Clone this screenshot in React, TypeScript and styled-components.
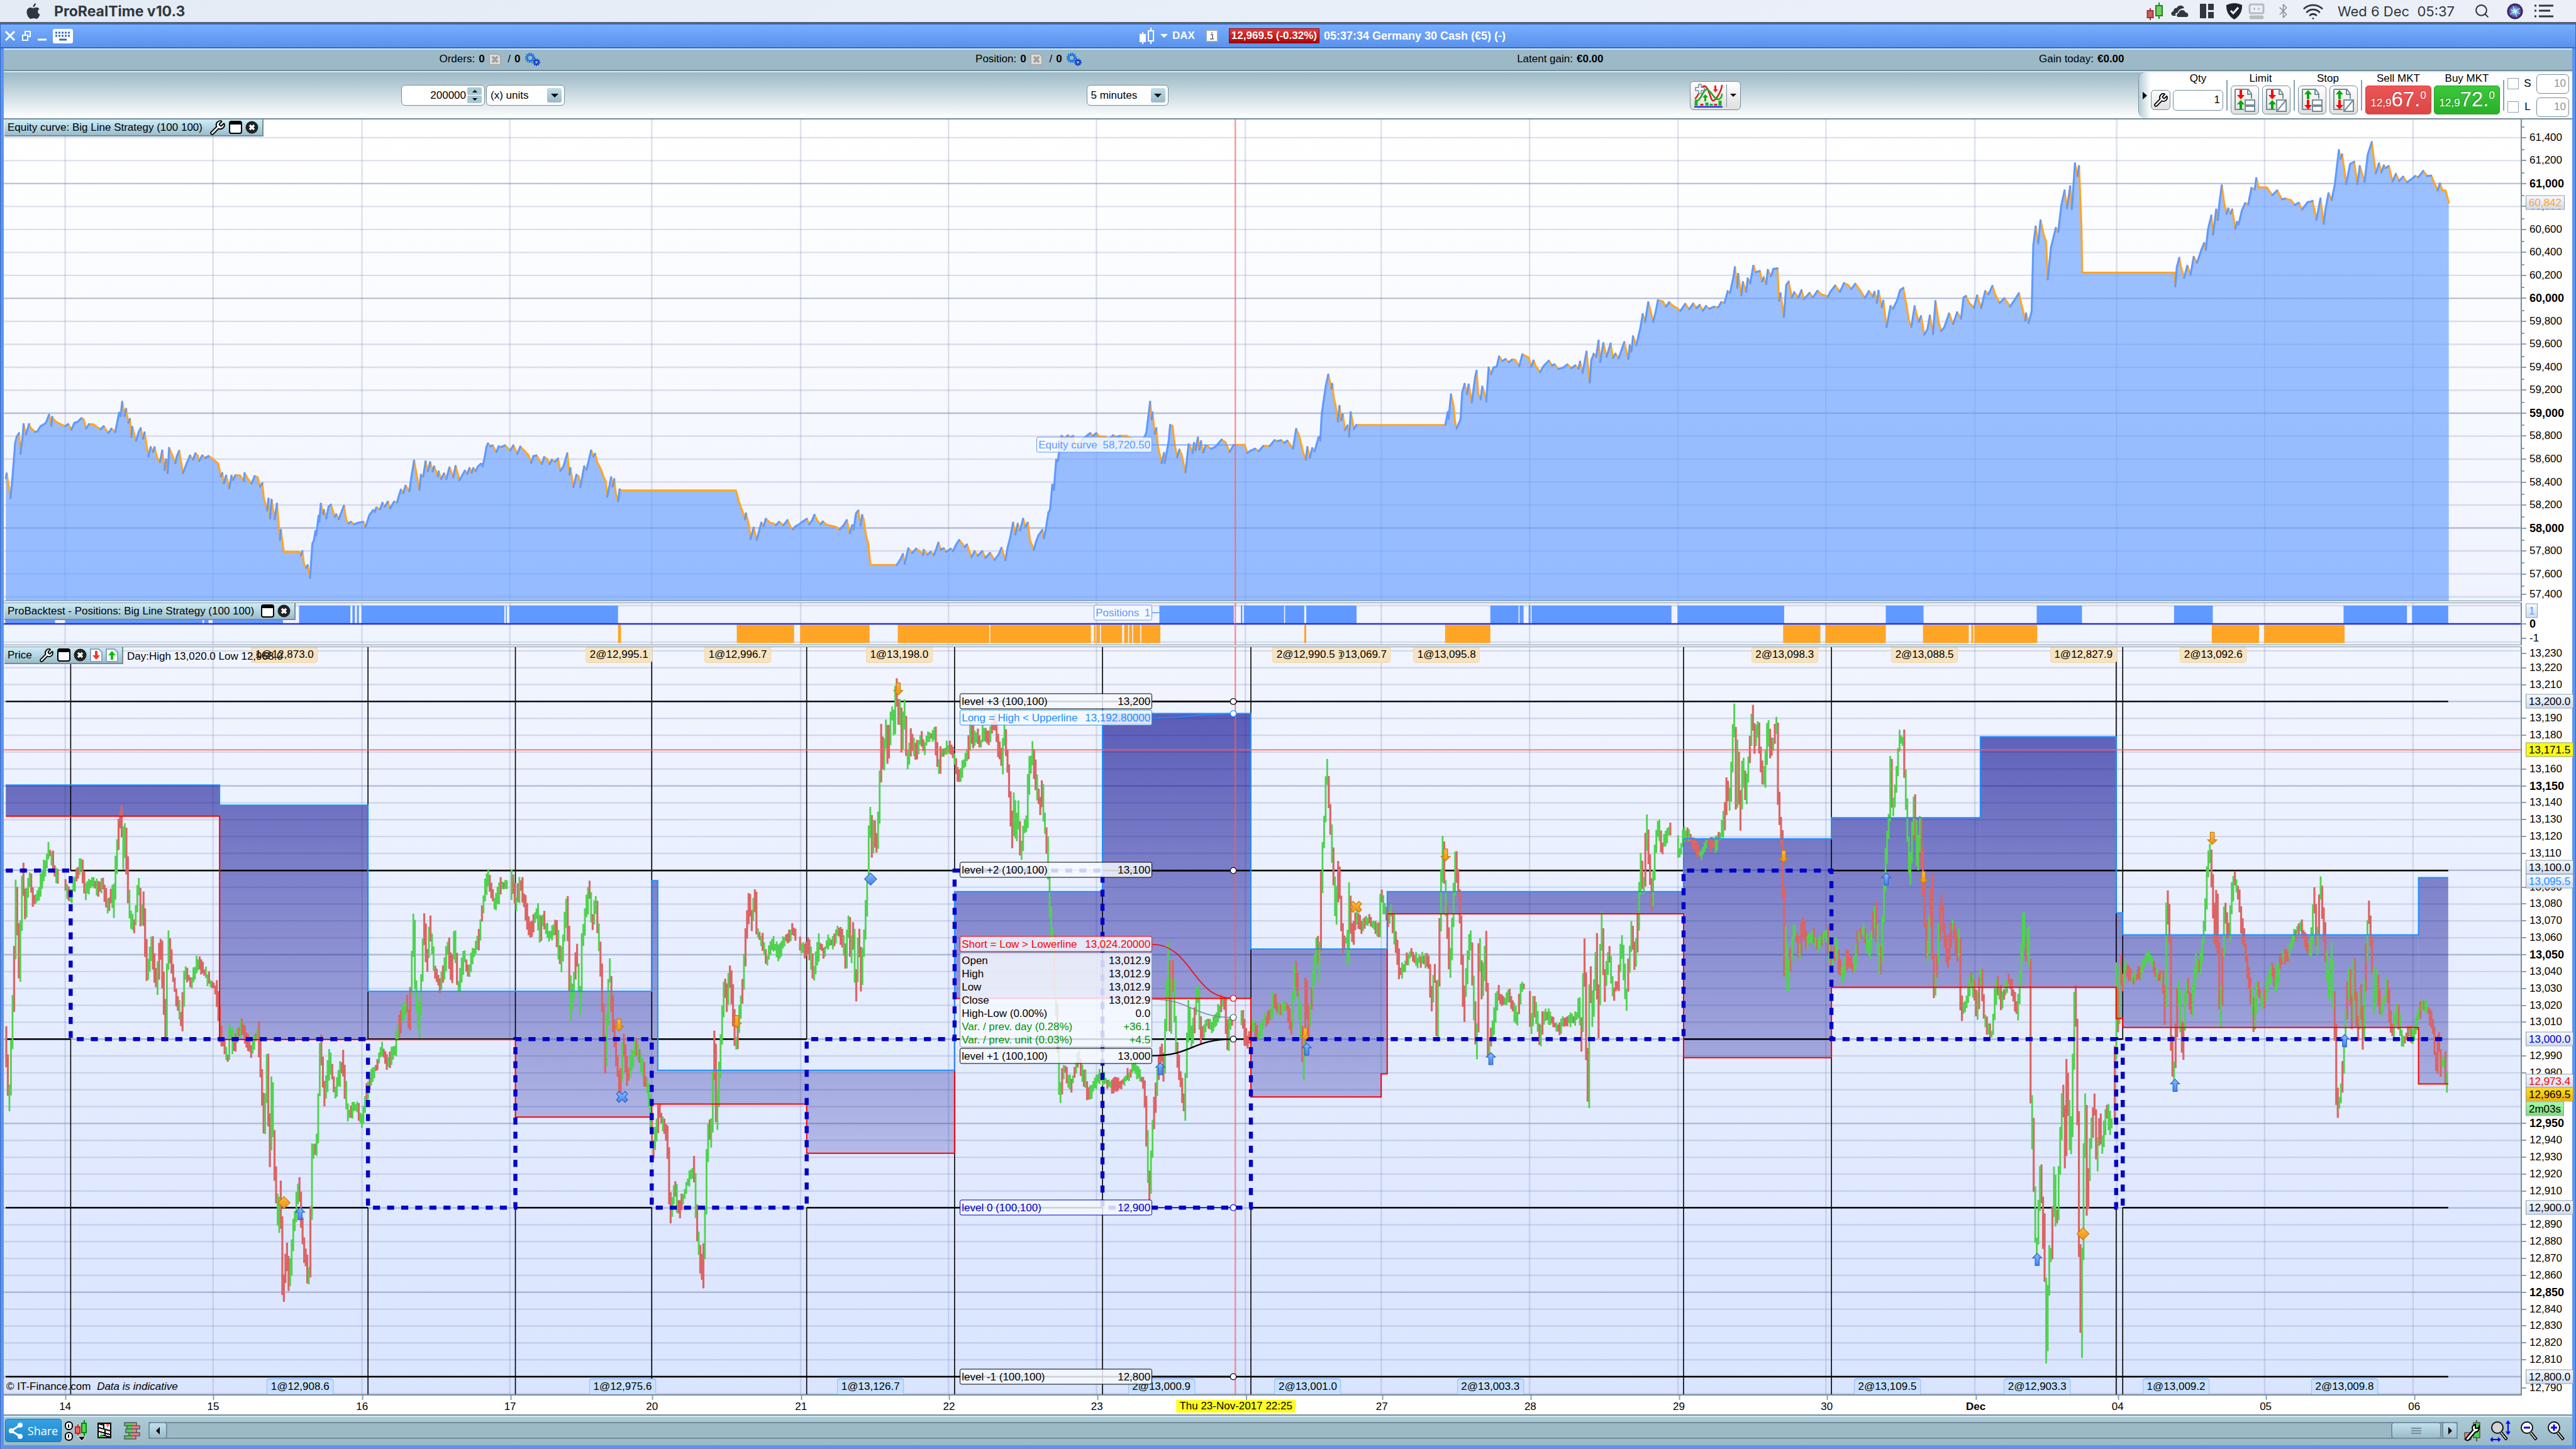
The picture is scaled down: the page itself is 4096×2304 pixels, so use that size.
import React from "react";
import styled, { createGlobalStyle, css } from "styled-components";
import { Wrench, Search, Wifi, Bluetooth } from "lucide-react";

const GlobalStyle = createGlobalStyle`
  * { box-sizing: border-box; }
  body { margin: 0; background: #5a94ee; font-family: "Liberation Sans", Arial, sans-serif; font-size: 17px; line-height: 20px; color: #000; }
  button, input, select { font: inherit; color: inherit; margin: 0; padding: 0; border: 0; background: none; }
  svg { display: block; }
`;

/* ---------- chart data ---------- */

type Pt = [number, number];
const pairs = (s: string): Pt[] =>
  s.trim().split(/\s+/).map((p) => p.split(",").map(Number) as Pt);

const PLOT = { x: 8, w: 5003 };
const EQUITY = { y: 238, h: 955 };
const POSITIONS = { y: 1199, h: 82 };
const PRICE = { y: 1286, h: 1485 };
const pctX = (x: number) => `${((x - PLOT.x) / PLOT.w) * 100}%`;
const pctY = (y: number, pane: { y: number; h: number }) => `${((y - pane.y) / pane.h) * 100}%`;
const priceY = (p: number) => 1394 + (13200 - p) * 3.355;
const equityY = (v: number) => 274 + (61400 - v) * 0.2279;

const EQUITY_FIRST = pairs(`8,510 9,482 11,540 14,630 17,480 20,300 22,262 25,242 27,365 30,250 31,188 34,250 38,188 40,210 46,235 49,230 53,200 57,190 60,180 64,132 67,198 68,145 70,160 75,180 85,200 89,188 93,222 97,180 101,175 106,153 109,160 112,215 116,188 122,190 126,205 131,218 135,200 141,242 145,215 150,235 155,120 157,140 159,55 162,140 164,97 167,180 169,158 171,265 172,205 177,288 180,240 183,212 186,275 188,238 193,380 196,325 199,355 201,326 204,385 208,415 211,345 214,462 216,398 218,480 220,330 225,385 228,420 230,380 233,348 238,480 242,430 247,375 251,400 254,362 257,375 259,408 263,375 267,390 271,378 278,400 284,425 287,500 289,480 291,540 294,495 298,570 301,495 303,520 306,493 312,493 317,528 318,480 321,505 327,542 331,498 335,505 338,560 341,540 343,628 347,702 349,632 351,750 353,638 357,755 360,662 364,878 365,818 368,920 369,948 389,948 391,970 393,945 395,1020 398,1045 400,1028 403,1105 406,900 408,880 410,825 411,850 414,735 415,768 417,662 420,725 421,700 424,750 427,680 430,668 435,740 437,725 440,755 443,720 447,674 450,760 453,780 456,770 460,785 466,775 472,770 475,802 480,730 485,700 487,712 489,685 494,695 497,657 500,680 504,650 507,690 512,650 516,655 518,620 521,578 524,600 527,555 532,588 534,520 538,405 541,480 545,580 547,490 550,500 553,410 556,470 559,415 562,470 564,440 569,500 570,470 573,515 577,482 580,515 584,446 589,505 592,438 597,522 601,490 604,465 607,485 610,450 613,478 615,450 618,468 621,440 625,424 627,440 630,380 632,325 634,303 637,320 640,315 645,355 648,320 651,325 656,315 663,345 667,315 672,365 676,322 682,350 687,375 690,420 693,378 697,375 704,425 707,385 711,395 714,427 717,400 721,412 725,393 728,468 732,440 737,362 740,490 741,450 745,563 749,490 752,500 754,563 759,440 762,460 768,345 771,380 773,365 776,415 781,460 784,500 787,530 789,620 794,505 796,560 798,515 800,600 803,648 805,577 808,583 956,583 960,650 965,715 968,755 969,720 973,790 975,872 979,805 983,878 989,775 992,795 995,752 1000,775 1005,780 1008,790 1012,770 1018,790 1023,760 1027,800 1030,815 1033,798 1038,785 1042,770 1048,752 1051,785 1055,760 1058,728 1062,765 1066,785 1069,768 1073,785 1078,792 1086,800 1091,815 1096,790 1100,760 1104,838 1107,790 1109,815 1112,720 1115,703 1118,792 1120,730 1122,755 1125,850 1128,900 1130,1000 1131,1027 1165,1027 1168,1005 1170,990 1173,962 1175,1020 1180,928 1185,955 1190,930 1195,945 1199,968 1200,937 1205,965 1209,948 1213,968 1216,935 1219,895 1222,935 1226,928 1229,948 1235,930 1238,945 1242,905 1246,878 1250,900 1253,920 1256,905 1262,980 1266,945 1270,972 1276,945 1280,985 1286,955 1292,997 1297,965 1301,925 1306,998 1309,920 1312,870 1316,775 1319,845 1322,782 1325,822 1329,752 1332,800 1335,775 1338,880 1343,937 1346,885 1349,850 1354,818 1356,868 1359,800 1362,712 1364,700 1367,548 1369,580 1372,400 1374,410 1379,258 1384,275 1387,255 1390,268 1394,258 1398,350 1402,300 1407,275 1416,242 1420,258 1424,242 1428,262 1436,262 1440,280 1446,255 1450,265 1455,258 1463,258 1475,285 1485,280 1489,240 1494,55 1496,160 1497,118 1500,245 1502,212 1504,320 1509,420 1512,360 1513,420 1518,290 1520,193 1523,198 1526,310 1529,385 1532,340 1535,372 1540,475 1544,308 1546,320 1549,360 1551,300 1553,345 1556,268 1558,340 1560,290 1563,358 1566,315`).map(
  ([x, y]): Pt => [x * 1.5306, 780 + y / 3]
);
const EQUITY_SECOND = pairs(`0,1535 5,1548 10,1540 18,1505 23,1518 28,1563 33,1530 47,1530 50,1568 55,1555 60,1548 64,1560 70,1535 78,1535 84,1508 88,1512 92,1508 96,1520 100,1510 107,1548 111,1455 115,1490 120,1568 123,1600 125,1540 128,1590 131,1545 134,1560 139,1493 141,1510 143,1380 148,1250 151,1198 155,1265 156,1242 158,1310 160,1340 163,1420 165,1346 167,1415 169,1385 172,1460 175,1438 177,1490 179,1375 183,1455 186,1436 297,1436 300,1375 301,1408 304,1292 307,1340 309,1420 311,1453 316,1408 318,1283 321,1242 324,1290 326,1245 330,1330 334,1213 336,1180 338,1290 341,1315 343,1255 346,1290 348,1325 351,1165 354,1197 357,1165 361,1160 364,1113 368,1135 372,1125 376,1140 380,1128 384,1128 389,1160 393,1103 401,1118 404,1162 407,1132 410,1160 415,1187 420,1155 426,1133 430,1155 433,1150 438,1172 444,1165 449,1150 454,1168 459,1155 463,1170 465,1137 468,1190 473,1090 477,1236 479,1130 482,1100 485,1115 488,1038 490,1140 494,1050 498,1115 503,1052 506,1120 509,1100 513,1122 520,1045 525,1125 527,1060 529,1090 531,1018 535,1060 540,980 543,913 546,950 550,857 553,900 556,950 559,905 562,848 568,853 572,878 576,857 580,872 586,885 590,898 596,865 601,890 606,863 610,885 614,870 618,897 622,875 626,888 632,878 637,882 641,857 645,860 649,805 652,813 656,740 658,692 661,790 662,723 666,825 668,762 672,808 674,745 677,768 681,685 684,715 689,710 692,760 694,740 697,772 699,705 703,735 706,700 711,697 713,850 715,815 719,927 722,775 725,760 729,835 732,810 737,835 741,800 744,842 751,813 755,835 761,803 765,818 774,830 777,808 783,778 789,808 794,767 799,775 803,795 808,770 814,800 820,837 825,805 830,830 832,808 835,860 837,803 841,880 843,850 847,975 852,875 855,888 860,850 864,800 868,790 872,875 875,945 878,973 882,876 887,950 890,923 894,1010 898,985 901,920 905,1008 908,852 912,950 915,993 919,975 925,910 930,960 935,905 940,935 943,835 946,828 950,860 956,883 960,825 965,885 970,805 974,820 979,780 983,825 988,860 994,838 1001,877 1006,850 1012,815 1017,895 1020,945 1021,910 1024,955 1028,900 1030,590 1033,500 1036,580 1039,471 1043,540 1046,570 1048,750 1052,600 1058,507 1061,525 1065,400 1069,330 1072,413 1076,310 1078,418 1082,202 1085,262 1087,215 1090,500 1091,718 1206,718 1207,783 1209,690 1212,648 1214,690 1218,742 1222,685 1226,728 1230,643 1234,672 1240,605 1243,578 1245,610 1248,510 1252,448 1254,538 1258,420 1260,470 1262,390 1265,306 1268,390 1271,440 1273,415 1276,440 1278,420 1282,510 1284,478 1286,490 1290,425 1294,390 1298,395 1302,318 1306,325 1308,272 1311,315 1321,315 1328,352 1334,330 1340,372 1344,368 1351,375 1356,398 1361,388 1365,420 1372,385 1378,380 1383,468 1388,368 1392,487 1394,425 1398,343 1402,375 1406,300 1411,140 1413,180 1415,160 1418,240 1420,300 1425,205 1430,195 1434,300 1437,215 1443,290 1447,160 1452,102 1454,165 1457,250 1461,202 1464,245 1467,212 1469,225 1473,215 1478,288 1482,252 1486,285 1491,265 1496,292 1502,275 1506,262 1510,268 1516,238 1521,262 1526,260 1534,330 1537,297 1540,330 1544,330 1548,388`).map(
  ([x, y]): Pt => [2400 + x * 1.5944, 240 + y * 0.42092]
);
const EQUITY_PTS = [...EQUITY_FIRST, ...EQUITY_SECOND];

const PRICE_PTS = pairs(`12,2020 21,2195 31,1927 34,1762 41,1930 48,1721 52,1818 60,1741 70,1792 81,1767 92,1721 100,1690 105,1695 110,1735 117,1741 132,1757 141,1787 152,1746 163,1713 171,1772 184,1751 200,1767 206,1751 217,1802 225,1772 228,1805 236,1670 244,1601 247,1721 251,1640 260,1818 269,1843 279,1746 282,1838 287,1787 295,1935 304,1874 314,1960 322,1869 332,2055 337,1857 350,1960 363,2036 370,1928 383,1953 395,1908 413,1940 433,1966 441,2055 456,2106 459,2042 467,2081 482,2036 501,2087 516,2042 528,2246 534,2106 539,2310 543,2151 548,2310 556,2438 560,2348 565,2578 572,2482 577,2553 589,2412 597,2355 606,2482 617,2546 624,2278 632,2285 640,2068 647,2183 658,2100 669,2176 684,2106 693,2215 712,2195 722,2234 735,2151 750,2119 761,2081 773,2112 788,2081 799,2023 811,1991 816,2036 825,1832 829,1976 836,2042 846,1823 851,1915 857,1833 867,1935 878,1961 893,1879 900,1940 906,1859 913,1966 925,1894 932,1935 943,1894 954,1864 963,1792 971,1736 979,1777 987,1797 997,1757 1008,1754 1017,1777 1019,1746 1028,1797 1038,1751 1046,1802 1057,1853 1070,1808 1077,1859 1081,1818 1093,1864 1106,1833 1117,1915 1130,1787 1137,2010 1149,1889 1156,2004 1160,1859 1174,1762 1180,1838 1187,1792 1196,1905 1206,2119 1214,1915 1224,2068 1235,2170 1241,2074 1250,2138 1266,2074 1281,2125 1293,2183 1301,2291 1312,2208 1329,2259 1335,2412 1344,2361 1352,2406 1367,2355 1382,2317 1387,2425 1399,2543 1404,2438 1410,2234 1416,2272 1423,2055 1427,2240 1436,2055 1442,1953 1448,1991 1454,1921 1465,2081 1477,1985 1485,1864 1493,1777 1496,1838 1504,1772 1507,1853 1518,1869 1527,1910 1537,1869 1550,1894 1564,1864 1577,1848 1591,1869 1603,1892 1608,1875 1621,1932 1631,1875 1640,1892 1648,1869 1657,1875 1667,1846 1675,1863 1684,1903 1689,1823 1694,1898 1699,1840 1704,1978 1710,1852 1714,1949 1721,1857 1728,1737 1732,1605 1736,1685 1740,1645 1745,1679 1751,1582 1754,1456 1758,1513 1764,1444 1767,1501 1775,1410 1780,1456 1784,1358 1788,1433 1791,1398 1795,1478 1800,1404 1806,1513 1814,1467 1823,1496 1833,1461 1839,1484 1849,1461 1860,1456 1868,1530 1874,1490 1887,1484 1897,1493 1903,1524 1909,1547 1916,1524 1925,1501 1932,1444 1938,1473 1944,1456 1952,1478 1958,1450 1967,1467 1976,1444 1981,1427 1986,1478 1994,1519 1999,1438 2006,1524 2011,1605 2015,1668 2018,1582 2022,1651 2026,1605 2032,1697 2039,1633 2043,1645 2048,1524 2056,1490 2060,1542 2071,1605 2074,1553 2078,1622 2083,1668 2088,1754 2091,1840 2094,1892 2096,1857 2099,1949 2104,2030 2109,2176 2118,2119 2131,2157 2147,2100 2166,2176 2189,2138 2212,2157 2235,2148 2258,2119 2278,2157 2287,2387 2296,2208 2311,2081 2316,2132 2325,1892 2329,2041 2333,1909 2340,2075 2357,2208 2365,2001 2372,2070 2383,1961 2390,2058 2400,2030 2410,2041 2420,2024 2431,1990 2437,2001 2443,2070 2448,2030 2470,2018 2479,2064 2482,2067 2494,2034 2503,2059 2516,2026 2529,2017 2534,1984 2547,2005 2559,1993 2570,2051 2577,1918 2585,1993 2594,2133 2598,1951 2604,2042 2611,1968 2621,1868 2625,1934 2630,1727 2635,1636 2640,1520 2648,1653 2653,1719 2658,1827 2663,1719 2672,1876 2679,1868 2682,1910 2684,1760 2690,1868 2699,1818 2708,1843 2721,1827 2735,1835 2745,1851 2746,1777 2754,1802 2761,1827 2769,1810 2777,1876 2786,1934 2797,1910 2809,1893 2820,1910 2833,1901 2844,1918 2848,1993 2855,1926 2859,2059 2863,1910 2870,1669 2878,1818 2885,1926 2890,1827 2896,1702 2904,1794 2912,2009 2922,1885 2926,1852 2933,2001 2938,2100 2943,1868 2949,1968 2956,1868 2961,2092 2971,2034 2980,1968 2989,1993 3000,1976 3010,1993 3018,2026 3028,1955 3041,1976 3045,2034 3052,1993 3063,2059 3074,2009 3086,2026 3101,2046 3114,2022 3128,2026 3138,2017 3142,1984 3146,2075 3152,1876 3156,2092 3160,2183 3163,1926 3168,2026 3177,1860 3179,2051 3186,1827 3192,1968 3201,1885 3208,1976 3219,1951 3227,1868 3235,1993 3246,1843 3253,1910 3260,1810 3264,1711 3270,1769 3276,1628 3281,1711 3287,1794 3293,1686 3298,1632 3306,1686 3315,1661 3321,1644 3336,1677 3340,1698 3351,1653 3364,1669 3382,1698 3396,1669 3409,1682 3422,1661 3430,1628 3436,1553 3441,1595 3450,1412 3454,1586 3456,1470 3462,1628 3467,1512 3473,1586 3480,1495 3486,1408 3491,1478 3496,1437 3503,1520 3510,1553 3516,1445 3522,1487 3530,1462 3534,1429 3538,1595 3545,1669 3550,1934 3552,1843 3555,1959 3561,1910 3568,1843 3574,1860 3580,1893 3586,1835 3594,1876 3605,1856 3616,1876 3633,1852 3644,1915 3652,1875 3663,1943 3674,1898 3687,1926 3694,1869 3705,1846 3718,1892 3730,1806 3736,1892 3741,1926 3748,1760 3753,1679 3758,1616 3761,1513 3765,1616 3773,1536 3778,1467 3786,1467 3792,1605 3799,1748 3807,1588 3814,1708 3820,1633 3828,1823 3834,1909 3842,1754 3846,1978 3853,1915 3861,1788 3874,1909 3883,1829 3894,1898 3897,1857 3901,2018 3910,1995 3921,1938 3932,2007 3940,1932 3948,2030 3962,2058 3971,1949 3981,1989 3995,1943 4003,1972 4013,2012 4020,1926 4024,1817 4029,1898 4036,1840 4041,2281 4044,2230 4047,2415 4050,2483 4054,2449 4057,2337 4060,2320 4064,2471 4066,2415 4070,2701 4073,2589 4077,2494 4081,2483 4086,2337 4089,2415 4093,2415 4097,2281 4103,2157 4108,2303 4110,2118 4118,2281 4122,2213 4125,2017 4127,1972 4131,2060 4136,2483 4140,2685 4144,2337 4148,2185 4151,2393 4157,2281 4166,2185 4171,2309 4176,2224 4181,2286 4187,2224 4191,2196 4197,2241 4206,2224 4209,1926 4213,2041 4217,1915 4220,1955 4228,1915 4239,1949 4256,1932 4272,1892 4283,1920 4294,1943 4302,1932 4306,2024 4310,1771 4316,1869 4319,2080 4324,2146 4332,1949 4338,2041 4341,2084 4349,1955 4360,2001 4367,1909 4376,1920 4384,1840 4389,1754 4395,1679 4400,1754 4406,1869 4409,1777 4416,2035 4424,1806 4433,1857 4442,1743 4450,1765 4459,1840 4469,1909 4484,2035 4489,1961 4500,1995 4519,1920 4524,1961 4535,1909 4552,1892 4563,1857 4576,1840 4588,1875 4596,1892 4603,1771 4608,1892 4615,1748 4623,1857 4631,1978 4637,1886 4645,2067 4648,2202 4656,2180 4661,2101 4667,1995 4672,1938 4678,2030 4681,1909 4689,2058 4694,1972 4700,2064 4705,1915 4711,1800 4716,1869 4722,2001 4728,1943 4735,2018 4747,1961 4758,2052 4768,2001 4777,2070 4793,2047 4799,2064 4807,2024 4818,1995 4831,2012 4839,2041 4845,2123 4850,2062 4855,2118 4862,2101 4866,2168`);

const QUIET: Pt[] = [[118, 128], [1009, 1016], [1583, 1590], [2451, 2467], [3030, 3040], [3323, 3334], [4198, 4203]];

/* Turns the sampled path into five-minute bars, one pair of strokes per direction. */
function buildCandles() {
  let seed = 7;
  const rnd = () => ((seed = (seed * 16807) % 2147483647) / 2147483647);
  let i = 0;
  const at = (x: number) => {
    while (i < PRICE_PTS.length - 2 && PRICE_PTS[i + 1][0] <= x) i++;
    const [x0, y0] = PRICE_PTS[i];
    const [x1, y1] = PRICE_PTS[i + 1];
    return y0 + ((y1 - y0) * (x - x0)) / (x1 - x0 || 1);
  };
  let up = "";
  let down = "";
  const step = 3.1;
  for (let x = 13; x < 4867; x += step) {
    const a = at(x);
    const inner = PRICE_PTS.filter((p) => p[0] > x && p[0] < x + step).map((p) => p[1]);
    const b = at(Math.min(x + step, 4866));
    const ext = rnd();
    if (QUIET.some(([q0, q1]) => x > q0 && x < q1)) continue;
    const move = b - a;
    const wick = Math.abs(move) > 12 ? 20 : 14;
    const top = Math.min(a, b, ...inner) - ext * wick;
    const bottom = Math.max(a, b, ...inner) + rnd() * wick + 3;
    const rising = Math.abs(move) < 5 ? rnd() > 0.5 : rnd() > 0.24 ? move < 0 : move > 0;
    const d = `M${x.toFixed(1)} ${top.toFixed(1)}V${bottom.toFixed(1)}`;
    if (rising) up += d;
    else down += d;
  }
  return { up, down };
}
const CANDLES = buildCandles();

const BANDS: [number, number, number, number][] = [
  [12, 437, 1560, 1622], [437, 732, 1600, 2066], [732, 1025, 1970, 2066], [1025, 1296, 1970, 2220],
  [1296, 1308, 1750, 2194], [1308, 1604, 2127, 2194], [1604, 1898, 2127, 2292], [1898, 2192, 1772, 1984],
  [2192, 2487, 1418, 1984], [2487, 2746, 1886, 2180], [2746, 2758, 1886, 2134], [2758, 3347, 1772, 1816],
  [3347, 3641, 1667, 2102], [3641, 3937, 1625, 1962], [3937, 4207, 1464, 1962], [4207, 4220, 1814, 2024],
  [4220, 4808, 1858, 2042], [4808, 4867, 1744, 2154],
];
const stepLine = (k: 2 | 3) =>
  BANDS.map((b, i) => `${i ? "L" : "M"}${b[0]} ${b[k]}L${b[1]} ${b[k]}`).join("");

const DAY_GRID = [130, 424, 720, 1014, 1296, 1592, 1886, 2180, 2476, 2746, 3041, 3336, 3630, 3926, 4208, 4502, 4797];
const DAY_NAMES = ["14", "15", "16", "17", "20", "21", "22", "23", "", "27", "28", "29", "30", "Dec", "04", "05", "06"];

const Y = { l3: 1394, l2: 1730, l1: 2065, l0: 2400, lm: 2736 };
const LEVEL_H: [number, [number, number][]][] = [
  [Y.l3, [[12, 4867]]],
  [Y.l2, [[141, 1898], [2192, 3347], [3641, 4867]]],
  [Y.l1, [[12, 141], [732, 1025], [1296, 1604], [1898, 2487], [3347, 3641], [4207, 4220]]],
  [Y.l0, [[12, 732], [1025, 1296], [1604, 2192], [2487, 4207], [4220, 4867]]],
  [Y.lm, [[12, 4867]]],
];
const LEVEL_V: [number, number, number][] = [
  [141, Y.l2, Y.l1], [732, Y.l1, Y.l0], [1025, Y.l1, Y.l0], [1296, Y.l1, Y.l0], [1604, Y.l1, Y.l0],
  [1898, Y.l2, Y.l1], [2192, Y.l0, Y.l0], [2487, Y.l1, Y.l0], [3347, Y.l2, Y.l1], [3641, Y.l2, Y.l1],
  [4207, Y.l1, Y.l0], [4220, Y.l1, Y.l0],
];
const ZERO_LEVEL =
  "M12 1730H141V2065H732V2400H1025V2065H1296V2400H1604V2065H1898V1730H2192V2400H2487V2065H3347V1730H3641V2065H4207V2400H4220V2065H4867";

const LONG_BARS = pairs(`11,110 130,403 406,415 423,563 595,697 701,706 710,714 719,1003 1006,1008 1013,1229 2305,2453 2467,2470 2473,2553 2555,2593 2597,2697 2963,3019 3021,3029 3039,3043 3045,3323 3335,3547 3749,3824 4049,4139 4322,4399 4659,4785 4795,4867`);
const SHORT_BARS = pairs(`1229,1235 1465,1579 1591,1729 1785,1967 1969,2169 2175,2178 2180,2187 2189,2231 2235,2243 2245,2251 2253,2267 2269,2307 2593,2597 2873,2963 3545,3619 3629,3749 3823,3914 3919,3923 3925,4050 4397,4491 4501,4661`);

type Kind = "down" | "up" | "diaO" | "diaB" | "xO" | "xB";
const MARKS: [Kind, number, number][] = [
  ["down", 1786, 1369], ["down", 1231, 2037], ["down", 1465, 2030], ["down", 2595, 2055], ["down", 2874, 1699],
  ["down", 3546, 1702], ["down", 3824, 1744], ["down", 4398, 1666], ["diaO", 565, 2390], ["diaO", 4141, 2452],
  ["xO", 2696, 1802], ["diaB", 1731, 1747], ["xB", 1237, 2180], ["up", 597, 2412], ["up", 2307, 2124],
  ["up", 2598, 2085], ["up", 2964, 2104], ["up", 3750, 1747], ["up", 4050, 2503], ["up", 4324, 2157], ["up", 4661, 2068],
];
const MARK_PATH: Record<Kind, string> = {
  down: "M-4 -12H4V3H9L0 12L-9 3H-4Z",
  up: "M-4 12H4V-3H9L0 -12L-9 -3H-4Z",
  diaO: "M0 -12L12 0L0 12L-12 0Z",
  diaB: "M0 -12L12 0L0 12L-12 0Z",
  xO: "M0 -5L6 -11L11 -6L6 0L11 6L6 11L0 5L-6 11L-11 6L-6 0L-11 -6L-6 -11Z",
  xB: "M0 -5L6 -11L11 -6L6 0L11 6L6 11L0 5L-6 11L-11 6L-6 0L-11 -6L-6 -11Z",
};

const SELL_TAGS: [number, string][] = [
  [566, "1@12,873.0"], [1231, "2@12,995.1"], [1467, "1@12,996.7"], [1788, "1@13,198.0"], [2699, "1@13,069.7"],
  [2596, "2@12,990.5"], [2876, "1@13,095.8"], [3548, "2@13,098.3"], [3826, "2@13,088.5"], [4142, "1@12,827.9"], [4400, "2@13,092.6"],
];
const BUY_TAGS: [number, string][] = [
  [597, "1@12,908.6"], [1238, "1@12,975.6"], [1731, "1@13,126.7"], [2309, "2@13,000.9"], [2600, "2@13,001.0"],
  [2963, "2@13,003.3"], [3752, "2@13,109.5"], [4050, "2@12,903.3"], [4326, "1@13,009.2"], [4661, "2@13,009.8"],
];

/* ---------- window chrome ---------- */

const Page = styled.div`
  display: flex; flex-direction: column; min-height: 100vh; width: 100%;
`;
const MenuBar = styled.header`
  height: 37px; flex: none; display: flex; align-items: center; justify-content: space-between;
  background: linear-gradient(90deg, #e3ebf4, #e8eff8 50%, #eceff8); border-bottom: 2px solid #56626f;
  font: 22px/24px Inter, "Noto Sans", sans-serif; color: #30373e; padding: 0 32px 0 42px;
`;
const MenuGroup = styled.div`display: flex; align-items: center;`;
const AppName = styled.strong`font-weight: 700; font-size: 23px; margin-left: 22px;`;
const StatusSlot = styled.span<{ $w: number }>`
  width: ${(p) => p.$w}px; display: flex; justify-content: center; white-space: pre;
`;
const Frame = styled.div`
  flex: 1; display: flex; flex-direction: column; padding: 0 5px 6px; background: #5a94ee;
  border-left: 1px solid #3468c4; border-right: 1px solid #3468c4;
`;
const TitleBar = styled.div`
  height: 40px; flex: none; margin: 0 -5px; padding: 0 6px; display: flex; align-items: center;
  background: linear-gradient(#78aeff, #5a92ec); border-top: 2px solid #3468c4; border-bottom: 2px solid #3468c4; color: #fff;
`;
const WindowButtons = styled.div`display: flex; align-items: center; gap: 9px; width: 110px;`;
const BareButton = styled.button`display: inline-flex; align-items: center; cursor: pointer; flex: none;`;
const TitleCenter = styled.div`
  flex: 1; display: flex; align-items: center; justify-content: center; gap: 7px; font-weight: 700; font-size: 18px;
`;
const Ticker = styled.span`font-weight: 700; font-size: 17px; margin-right: 10px;`;
const LastPrice = styled.span`
  margin-left: 10px; padding: 0 3px; border: 1px solid #8e0a0a; background: linear-gradient(#e83c3c, #a80404); line-height: 22px; font-size: 17px;
`;
const AccountRow = styled.div`
  height: 36px; flex: none; display: flex; align-items: center; justify-content: space-evenly; background: #9bb9c6;
  border-top: 2px solid #d4ecf8; border-bottom: 2px solid #768c98; padding: 0 20px 2px 0;
`;
const AccountItem = styled.div`display: flex; align-items: center; gap: 6px;`;
const ToolRow = styled.div`
  height: 77px; flex: none; display: flex; border-top: 2px solid #d4ecf8; border-bottom: 2px solid #768c98;
  background: linear-gradient(#9bb9c6, #fff);
`;
const Spacer = styled.div<{ $grow: number }>`flex: ${(p) => p.$grow} 1 0;`;
const ToolGroup = styled.div`display: flex; align-items: center; gap: 2px;`;
const fieldBox = css`
  border: 1px solid #768c98; border-radius: 6px; background: #fff; display: flex; align-items: center;
`;
const Field = styled.label<{ $w: number; $h?: number }>`
  ${fieldBox} width: ${(p) => p.$w}px; height: ${(p) => p.$h ?? 33}px; position: relative; padding: 0 4px;
`;
const TextInput = styled.input<{ $muted?: boolean }>`
  width: 100%; min-width: 0; text-align: right; outline: none; ${(p) => p.$muted && "color: #8797a1;"}
`;
const Select = styled.select`appearance: none; width: 100%; outline: none; padding: 0 2px; height: 24px;`;
const Caret = styled.span`
  position: absolute; right: 4px; top: 4px; bottom: 4px; width: 23px; pointer-events: none; border-radius: 3px;
  background: linear-gradient(#bfdfea, #9bb9c6); display: flex; align-items: center; justify-content: center;
`;
const Triangle = styled.i<{ $dir?: "up" | "down"; $s?: number; $c?: string }>`
  border: ${(p) => p.$s ?? 6}px solid transparent;
  ${(p) => (p.$dir === "up" ? "border-top: 0; border-bottom-color" : "border-bottom: 0; border-top-color")}: ${(p) => p.$c ?? "#000"};
`;
const Spin = styled.span`display: flex; flex-direction: column; gap: 1px; margin-left: 2px;`;
const SpinButton = styled.button`
  width: 23px; height: 12px; display: flex; align-items: center; justify-content: center; background: #a9c8d4; border-radius: 2px;
`;
const RaisedButton = styled.button<{ $w: number; $h: number }>`
  ${fieldBox} justify-content: center; width: ${(p) => p.$w}px; height: ${(p) => p.$h}px; flex: none;
  background: linear-gradient(#fff, #dfdfdf);
`;
const SplitLine = styled.span`width: 1px; align-self: stretch; margin: 4px 5px; background: #768c98;`;
const OrderPanel = styled.div`
  display: flex; align-items: stretch; background: #fff; border-left: 1px solid #768c98; border-radius: 12px 0 0 12px; padding-right: 5px;
`;
const Collapse = styled.button`
  width: 19px; display: flex; align-items: center; justify-content: center; background: linear-gradient(90deg, #b4ccd6, #fff); border-radius: 12px 0 0 12px;
`;
const OrderGroup = styled.div<{ $gap?: number }>`
  display: grid; grid-template: 20px 46px / auto auto; row-gap: 1px; padding-right: 7px; column-gap: ${(p) => p.$gap ?? 5}px;
  align-items: center; margin-right: 5px; position: relative;
  &::after { content: ""; position: absolute; right: 0; top: 12px; bottom: 12px; width: 2px; background: #8aa3b0; }
`;
const OrderLabel = styled.span<{ $at: string }>`grid-row: 1; grid-column: ${(p) => p.$at}; text-align: center;`;
const OrderCell = styled.div`grid-row: 2; display: flex;`;
const QtyLabel = styled.label`grid-row: 1; grid-column: 2; text-align: center;`;
const TradeButton = styled.button<{ $tone: "sell" | "buy" }>`
  width: 105px; height: 46px; border-radius: 5px; color: #fff; display: flex; justify-content: center; align-items: baseline;
  text-shadow: -1px -1px 0 rgba(0, 0, 0, 0.35);
  background: ${(p) => (p.$tone === "sell" ? "linear-gradient(#ee5555, #dc4646)" : "linear-gradient(#3cc83c, #28b028)")};
  border: 1px solid ${(p) => (p.$tone === "sell" ? "#d84040" : "#1fa01f")};
`;
const BigDigits = styled.span`font-size: 33px; line-height: 42px;`;
const SupDigit = styled.span`font-size: 17px; align-self: flex-start; line-height: 30px;`;
const StopGrid = styled.div`display: grid; grid-template-columns: 18px 22px 52px; row-gap: 6px; column-gap: 3px; align-items: center; align-content: center;`;
const Tick = styled.input`appearance: none; width: 18px; height: 18px; margin: 0; border: 1px solid #8aa3b0; background: #fff;`;
const CenterText = styled.label`text-align: center;`;

/* ---------- charts ---------- */

const Charts = styled.main`flex: 1; display: flex; flex-direction: column; background: #fff;`;
const Pane = styled.section<{ $grow: number }>`
  display: flex; flex: ${(p) => p.$grow} 1 0; min-height: 0;
`;
const Plot = styled.div<{ $bg: string }>`
  flex: 1; position: relative; overflow: hidden; background: ${(p) => p.$bg}; border-right: 2px solid #768c98;
`;
const Canvas = styled.svg`position: absolute; inset: 0; width: 100%; height: 100%;`;
const Axis = styled.div`width: 80px; flex: none; position: relative;`;
const Divider = styled.div`height: 4px; flex: none; margin-right: 80px; border-top: 1px solid #768c98; border-bottom: 1px solid #768c98; background: #fff;`;
const Scale = styled.span<{ $bold?: boolean }>`
  position: absolute; left: 0; display: flex; align-items: center; transform: translateY(-50%); white-space: nowrap;
  ${(p) => p.$bold && "font-weight: 700; font-size: 18px;"}
  &::before { content: ""; width: 7px; height: 2px; background: #8aa3b0; margin-right: 5px; }
`;
const MinorTick = styled.i`position: absolute; left: 0; width: 4px; height: 2px; background: #8aa3b0;`;
const Flag = styled.span<{ $c: string; $bg?: string }>`
  position: absolute; left: 6px; height: 23px; line-height: 21px; padding: 0 4px; border: 1px solid #8a9cb0; transform: translateY(-50%);
  color: ${(p) => p.$c}; background: ${(p) => p.$bg ?? "linear-gradient(#f6f9ff, #d0dcf0)"};
`;
const Chip = styled.div`
  position: absolute; left: 1px; top: 0; height: 27px; padding: 0 6px 0 5px; display: flex; align-items: center; gap: 5px;
  background: linear-gradient(#cdeef8, #9bbccb); border-right: 2px solid #768c98; border-bottom: 2px solid #768c98; white-space: nowrap;
`;
const ChipText = styled.span`margin-right: 6px;`;
const DayText = styled.span`position: absolute; top: 5px; left: 196px; white-space: nowrap;`;
const Tag = styled.span<{ $side: "sell" | "buy" }>`
  position: absolute; transform: translateX(-50%); padding: 0 6px; white-space: nowrap; height: 25px; line-height: 23px;
  ${(p) => (p.$side === "sell"
    ? "top: 0; background: #f6e3c2; border: 1px solid #f2d49c; border-top: 0; border-radius: 0 0 5px 5px;"
    : "bottom: 0; background: #c8e0ff; border: 1px solid #70a8f4; border-bottom: 0; border-radius: 5px 5px 0 0;")}
`;
const InfoBox = styled.div<{ $c: string; $w: number }>`
  position: absolute; width: ${(p) => p.$w}px; border: 1px solid ${(p) => p.$c}; border-radius: 3px; padding: 1px 2px;
  background: rgba(246, 249, 255, 0.84); color: ${(p) => p.$c}; transform: translate(-100%, -50%);
`;
const InfoRow = styled.div<{ $c?: string }>`
  display: flex; justify-content: space-between; line-height: 21px; white-space: nowrap; color: ${(p) => p.$c ?? "inherit"};
`;
const Notice = styled.p`position: absolute; left: 4px; bottom: 0; margin: 0; line-height: 24px; em { margin-left: 5px; }`;
const TimeAxis = styled.div`
  height: 32px; flex: none; position: relative; margin-right: 80px; border-top: 2px solid #768c98;
`;
const DayLabel = styled.span<{ $bold?: boolean }>`
  position: absolute; top: 0; transform: translateX(-50%); padding-top: 8px; ${(p) => p.$bold && "font-weight: 700;"}
  &::before { content: ""; position: absolute; top: 0; left: 50%; width: 2px; height: 7px; background: #8aa3b0; }
`;
const CursorLabel = styled.span`position: absolute; top: 7px; transform: translateX(-50%); background: #ffff1e; padding: 0 5px; white-space: nowrap;`;

/* ---------- bottom bar ---------- */

const BottomBar = styled.footer`
  height: 49px; flex: none; display: flex; align-items: center; padding: 0 6px 0 2px; background: linear-gradient(#acccd8, #9bb9c6);
  border-top: 2px solid #768c98; box-shadow: inset 0 2px 0 #d4ecf8;
`;
const ShareButton = styled.button`
  width: 90px; height: 37px; border-radius: 4px; border: 1px solid #1478bc; background: linear-gradient(#36a0e4, #1f88cc); color: #fff;
  display: flex; align-items: center; justify-content: center; gap: 8px; font: 18px/24px "Open Sans", sans-serif;
`;
const BarIcons = styled.div`display: flex; align-items: center; gap: 16px; padding: 0 13px 0 4px;`;
const BarButton = styled(BareButton)<{ $w: number }>`width: ${(p) => p.$w}px; overflow: hidden;`;
const Track = styled.div`
  flex: 1; height: 27px; display: flex; justify-content: space-between; align-items: center; background: #9bb9c6;
  border-top: 2px solid #768c98; border-bottom: 2px solid #768c98; margin-right: 10px;
`;
const TrackEnd = styled.div`display: flex; gap: 1px;`;
const Knob = styled.button<{ $w: number }>`
  width: ${(p) => p.$w}px; height: 27px; border: 2px solid #7590a0; border-radius: 5px; background: linear-gradient(#bfe0ec, #9bbccb);
  display: flex; align-items: center; justify-content: center;
`;
const ZoomIcons = styled.div`display: flex; align-items: center; gap: 15px; padding-right: 6px;`;

/* ---------- icons ---------- */

const WrenchIcon = ({ s = 26 }: { s?: number }) => (
  <Wrench size={s} fill="#fff" stroke="#000" strokeWidth={1.8} />
);
const WindowIcon = () => (
  <svg width="21" height="21" viewBox="0 0 21 21"><rect x="1" y="1" width="19" height="19" rx="3" fill="#fff" stroke="#000" strokeWidth="2" /><path d="M1 6V4Q1 1 4 1H17Q20 1 20 4V6Z" fill="#000" /></svg>
);
const CloseIcon = () => (
  <svg width="21" height="21" viewBox="0 0 21 21"><circle cx="10.500" cy="10.500" r="10" fill="#222" /><path d="M7 7L14 14M14 7L7 14" stroke="#fff" strokeWidth="3.500" /></svg>
);
const PageArrow = ({ up }: { up?: boolean }) => (
  <svg width="20" height="22" viewBox="0 0 20 22"><path d="M1 1H14L19 6V21H1Z" fill="#fff" stroke="#8aa3c0" strokeWidth="2" /><path d={up ? "M10 4L16 11H12V18H8V11H4Z" : "M10 18L16 11H12V4H8V11H4Z"} fill={up ? "#00c000" : "#ff3030"} /></svg>
);
const Gears = () => (
  <svg width="25" height="21" viewBox="0 0 25 21" fill="none">
    <circle cx="9" cy="8" r="6.500" stroke="#1466d8" strokeWidth="3" strokeDasharray="2 1.4" /><circle cx="9" cy="8" r="4.500" stroke="#1d7ae8" strokeWidth="2.500" />
    <circle cx="19" cy="15" r="4.500" stroke="#0a30b8" strokeWidth="2.500" strokeDasharray="1.8 1.2" /><circle cx="19" cy="15" r="3" stroke="#0d3fd0" strokeWidth="2" />
  </svg>
);
const CancelPage = () => (
  <svg width="20" height="19" viewBox="0 0 20 19"><path d="M1 1H15L19 5V18H1Z" fill="#dcdcd8" stroke="#aaa" strokeWidth="2" /><path d="M6 5L14 14M14 5L6 14" stroke="#a0a0a0" strokeWidth="4" /></svg>
);
const OrderIcon = ({ stop, slash }: { stop?: boolean; slash?: boolean }) => {
  const upArrow = (y: number) => `M11 ${y}L17 ${y + 7}H13V${y + 15}H9V${y + 7}H5Z`;
  const downArrow = (y: number) => `M11 ${y + 15}L17 ${y + 8}H13V${y}H9V${y + 8}H5Z`;
  return (
    <svg width="36" height="38" viewBox="0 0 36 38" fill="none">
      <path d="M2 2H23L28 9V17M2 2V34H16M22 2V10H28" stroke="#748c98" strokeWidth="2" />
      <path d={stop ? upArrow(3) : downArrow(3)} fill={stop ? "#0a0" : "#f00"} />
      <path d={stop ? downArrow(19) : upArrow(19)} fill={stop ? "#f00" : "#0a0"} />
      <rect x="18" y="19" width="15" height="18" fill="#fff" stroke="#748c98" strokeWidth="2" />
      <path d={slash ? "M18 37L33 19" : "M18 28H33"} stroke="#748c98" strokeWidth={slash ? 2 : 4} />
    </svg>
  );
};
const MiniCandles = ({ w = 26, h = 28 }: { w?: number; h?: number }) => (
  <svg width={w} height={h} viewBox="0 0 26 28"><path d="M6 9V28" stroke="#a33" strokeWidth="2" /><path d="M20 0V26" stroke="#1a8a1a" strokeWidth="2" /><rect x="1.500" y="13" width="9" height="11" fill="#c86060" stroke="#a33333" strokeWidth="2" /><rect x="15" y="5" width="10" height="16" fill="#6fd060" stroke="#1a8a1a" strokeWidth="2" /></svg>
);
const IndicatorIcon = () => (
  <svg width="46" height="38" viewBox="0 0 46 38" fill="none">
    <path d="M1 24C8 20 10 2 17 4S26 30 31 27S44 10 44 2" stroke="#d02020" strokeWidth="2.500" /><path d="M1 26C10 32 14 8 20 9S32 26 38 25S44 18 44 16" stroke="#18a818" strokeWidth="2.500" />
    <path d="M3 35V28M20 35V30M27 35V32M41 35V27" stroke="#1b1" strokeWidth="5" /><path d="M12 35V32M34 35V32" stroke="#d22" strokeWidth="5" />
    <path d="M0 37H45" stroke="#22d" strokeWidth="2.500" /><path d="M7 1H11V6H16V11H11V16H7V11H2V6H7Z" fill="#fff" stroke="#748c98" strokeWidth="1.500" />
    <path d="M32 3H35V9H38L33.500 14L30 9H32Z" fill="#e22" /><path d="M16 28H19V22H22L17.500 17L13 22H16Z" fill="#0a0" />
  </svg>
);
const Magnifier = ({ sign }: { sign: "" | "+" | "-" }) => (
  <svg width={sign ? 28 : 32} height="34" viewBox={sign ? "0 0 28 34" : "0 0 32 34"} fill="none">
    <path d="M17 20L26 31" stroke="#000" strokeWidth="5" /><path d="M16 19L25 30" stroke="#fff" strokeWidth="1.500" />
    <circle cx="11" cy="12" r="9" fill={sign ? "#fff" : "#d4d4d4"} stroke="#111" strokeWidth="2" />
    {sign && <path d="M6 12H16" stroke="#00f" strokeWidth="3" />}
    {sign === "+" && <path d="M11 7V17" stroke="#00f" strokeWidth="3" />}
    {!sign && <path d="M28 3V21M25 6L28 2L31 6M25 18L28 22L31 18M1 31H14M4 28L0 31L4 34M12 28L15 31L12 34" stroke="#00f" strokeWidth="2" />}
  </svg>
);

/* ---------- pieces ---------- */

const DayGrid = ({ pane }: { pane: { y: number; h: number } }) => (
  <path d={DAY_GRID.map((x) => `M${x} ${pane.y}v${pane.h}`).join("")} stroke="rgba(130,140,180,.26)" strokeWidth="3" />
);

function EquityChart() {
  let rise = "";
  let fall = "";
  EQUITY_PTS.forEach((p, i) => {
    if (!i) return;
    const q = EQUITY_PTS[i - 1];
    const d = `M${q[0].toFixed(1)} ${q[1].toFixed(1)}L${p[0].toFixed(1)} ${p[1].toFixed(1)}`;
    if (p[1] < q[1]) rise += d;
    else fall += d;
  });
  const outline = EQUITY_PTS.map((p) => `L${p[0].toFixed(1)} ${p[1].toFixed(1)}`).join("");
  const values = Array.from({ length: 21 }, (_, i) => 61400 - i * 200);
  return (
    <Pane $grow={765}>
      <Plot $bg="linear-gradient(#ffffff, #f8faff 50%, #eff3ff)">
        <Canvas viewBox="8 238 5003 955" preserveAspectRatio="none" fill="none">
          <path d={values.map((v) => `M8 ${equityY(v)}H5011`).join("")} stroke="rgba(130,140,180,.26)" strokeWidth="3" />
          <path d={values.filter((v) => v % 1000 === 0).map((v) => `M8 ${equityY(v)}H5011`).join("")} stroke="rgba(110,125,165,.3)" strokeWidth="3" />
          <DayGrid pane={EQUITY} />
          <path d={`M12 1193${outline}V1193Z`} fill="rgba(96,153,255,.62)" />
          <path d={fall} stroke="#ffa526" strokeWidth="4" strokeLinecap="round" />
          <path d={rise} stroke="#6099ff" strokeWidth="4" strokeLinecap="round" />
          <path d="M2291 884H2456" stroke="#6099ff" strokeWidth="2" />
          <path d="M2456 238V1193" stroke="rgba(255,90,90,.65)" strokeWidth="3" />
        </Canvas>
        <InfoBox $c="#6099ff" $w={184} style={{ left: pctX(2291), top: pctY(884, EQUITY) }}>
          <InfoRow><span>Equity curve</span><span>58,720.50</span></InfoRow>
        </InfoBox>
        <Chip>
          <ChipText>Equity curve: Big Line Strategy (100 100)</ChipText>
          <BareButton aria-label="Settings"><WrenchIcon /></BareButton>
          <BareButton aria-label="Detach"><WindowIcon /></BareButton>
          <BareButton aria-label="Close"><CloseIcon /></BareButton>
        </Chip>
      </Plot>
      <Axis>
        {values.map((v) => (
          <React.Fragment key={v}>
            <MinorTick style={{ top: pctY(equityY(v + 100), EQUITY) }} />
            <Scale $bold={v % 1000 === 0} style={{ top: pctY(v === 57400 ? 1180 : equityY(v), EQUITY) }}>{v.toLocaleString("en-US")}</Scale>
          </React.Fragment>
        ))}
        <Flag $c="#ffa526" style={{ top: pctY(403, EQUITY) }}>60,842</Flag>
      </Axis>
    </Pane>
  );
}

const PositionsPane = styled(Pane)`flex: none; height: 66px;`;
function PositionsChart() {
  const bars = (list: Pt[], y: number) => list.map(([a, b]) => `M${a} ${y}H${b}V${y + 36}H${a}Z`).join("");
  return (
    <PositionsPane $grow={0}>
      <Plot $bg="#f0f4ff">
        <Canvas viewBox="8 1199 5003 82" preserveAspectRatio="none" fill="none">
          <path d="M8 1204H5011M8 1276H5011" stroke="rgba(130,140,180,.26)" strokeWidth="3" />
          <DayGrid pane={POSITIONS} />
          <path d={bars(LONG_BARS, 1204)} fill="#6099ff" />
          <path d={bars(SHORT_BARS, 1242)} fill="#ffa526" />
          <path d="M8 1240H5011" stroke="#2a30e0" strokeWidth="3" />
          <path d="M2291 1218H2305" stroke="#6099ff" strokeWidth="2" />
          <path d="M2456 1199V1281" stroke="rgba(255,90,90,.65)" strokeWidth="3" />
        </Canvas>
        <InfoBox $c="#6099ff" $w={93} style={{ left: pctX(2291), top: pctY(1218, POSITIONS) }}>
          <InfoRow><span>Positions</span><span>1</span></InfoRow>
        </InfoBox>
        <Chip>
          <ChipText>ProBacktest - Positions: Big Line Strategy (100 100)</ChipText>
          <BareButton aria-label="Detach"><WindowIcon /></BareButton>
          <BareButton aria-label="Close"><CloseIcon /></BareButton>
        </Chip>
      </Plot>
      <Axis>
        <Scale $bold style={{ top: pctY(1240, POSITIONS) }}>0</Scale>
        <Scale style={{ top: pctY(1268, POSITIONS) }}>-1</Scale>
        <Flag $c="#6099ff" style={{ top: pctY(1214, POSITIONS) }}>1</Flag>
      </Axis>
    </PositionsPane>
  );
}

const NODES: [number, string][] = [
  [1394, "#000"], [1418, "#1e90ff"], [1730, "#000"], [1984, "#f00"], [2022, "#4a5a66"], [2065, "#000"], [2400, "#0000c8"], [2736, "#000"],
];
const QUOTES: [string, string, string?][] = [
  ["Open", "13,012.9"], ["High", "13,012.9"], ["Low", "13,012.9"], ["Close", "13,012.9"], ["High-Low (0.00%)", "0.0"],
  ["Var. / prev. day (0.28%)", "+36.1", "#009600"], ["Var. / prev. unit (0.03%)", "+4.5", "#009600"],
];
const LEVEL_BOXES: [string, string, number, string][] = [
  ["level +3 (100,100)", "13,200", 1394, "#000"],
  ["Long = High < Upperline", "13,192.80000", 1426, "#1e90ff"],
  ["level +2 (100,100)", "13,100", 1729, "#000"],
  ["Short = Low > Lowerline", "13,024.20000", 1876, "#f00"],
  ["level +1 (100,100)", "13,000", 2098, "#000"],
  ["level 0 (100,100)", "12,900", 2400, "#0000c8"],
  ["level -1 (100,100)", "12,800", 2736, "#000"],
];
const PRICE_FLAGS: [string, number, string, string?][] = [
  ["13,200.0", 1394, "#000"], ["13,171.5", 1490, "#000", "#fafa14"], ["13,100.0", 1724, "#000"], ["13,095.5", 1751, "#1e90ff"],
  ["13,000.0", 2065, "#0000c8"], ["12,973.4", 2148, "#f00"], ["12,969.5", 2175, "#000", "linear-gradient(#ffdc20, #f0b400)"],
  ["2m03s", 2203, "#000", "linear-gradient(#a4fca4, #80d880)"], ["12,900.0", 2400, "#000"], ["12,800.0", 2736, "#000"],
];
const FLAGGED = [13200, 13170, 13100, 13000, 12970, 12960, 12900, 12800];

function PriceChart() {
  const prices = Array.from({ length: 45 }, (_, i) => 13230 - i * 10);
  return (
    <Pane $grow={1188}>
      <Plot $bg="linear-gradient(#f1f5ff, #d9e4ff)">
        <Canvas viewBox="8 1286 5003 1485" preserveAspectRatio="none" fill="none">
          <defs>
            <linearGradient id="band" gradientUnits="userSpaceOnUse" x1="0" y1="1418" x2="0" y2="2292">
              <stop offset="0" stopColor="#00008b" stopOpacity=".62" /><stop offset="1" stopColor="#00008b" stopOpacity=".2" />
            </linearGradient>
            <linearGradient id="amber" x1="0" y1="0" x2="0" y2="1"><stop offset="0" stopColor="#ffb83c" /><stop offset="1" stopColor="#ee9410" /></linearGradient>
            <linearGradient id="azure" x1="0" y1="0" x2="0" y2="1"><stop offset="0" stopColor="#86bcff" /><stop offset="1" stopColor="#4484ee" /></linearGradient>
          </defs>
          <path d={prices.map((p) => `M8 ${priceY(p)}H5011`).join("")} stroke="rgba(130,140,180,.26)" strokeWidth="3" />
          <path d={prices.filter((p) => p % 50 === 0).map((p) => `M8 ${priceY(p)}H5011`).join("")} stroke="rgba(110,125,165,.3)" strokeWidth="3" />
          <DayGrid pane={PRICE} />
          {BANDS.map(([a, b, t, l]) => <path key={a} d={`M${a} ${t}H${b}V${l}H${a}Z`} fill="url(#band)" />)}
          <path d={LEVEL_H.map(([y, segs]) => segs.map(([a, b]) => `M${a} ${y}H${b}`).join("")).join("")} stroke="#000" strokeWidth="3" />
          <path d={LEVEL_V.map(([x, a, b]) => `M${x} 1286V${a}M${x} ${b}V2771`).join("")} stroke="#000" strokeWidth="2" />
          <path d={CANDLES.down} stroke="#dc6464" strokeWidth="4" />
          <path d={CANDLES.up} stroke="#50d250" strokeWidth="3.500" />
          <path d={stepLine(3)} stroke="#f00" strokeWidth="2.500" />
          <path d={stepLine(2)} stroke="#1e90ff" strokeWidth="2.500" />
          <path d={ZERO_LEVEL} stroke="#0000c8" strokeWidth="8" strokeDasharray="14 14" />
          <path d="M8 1490H5011M2456 1286V2771" stroke="rgba(255,90,90,.65)" strokeWidth="3" />
          <path d="M2291 1427C2370 1427 2370 1418 2452 1418" stroke="#1e90ff" strokeWidth="2" />
          <path d="M2291 1877C2370 1877 2370 1984 2452 1984" stroke="#f00" strokeWidth="2" />
          <path d="M2291 1986C2370 1986 2370 2022 2452 2022" stroke="#768c98" strokeWidth="2" />
          <path d="M2291 2098C2370 2098 2370 2065 2452 2065M2291 1394H2452M2291 1730H2452M2291 2736H2452" stroke="#000" strokeWidth="3" />
          <path d="M2291 2400H2452" stroke="#0000c8" strokeWidth="2" />
          {MARKS.map(([k, x, y]) => {
            const warm = k === "down" || k === "diaO" || k === "xO";
            return <path key={`${x}-${y}`} d={MARK_PATH[k]} transform={`translate(${x} ${y})`} fill={warm ? "url(#amber)" : "url(#azure)"} stroke={warm ? "#c87a08" : "#2a60c8"} strokeWidth="1.500" />;
          })}
          {NODES.map(([y, c]) => <circle key={y} cx="2452" cy={y} r="6" fill="#fff" stroke={c} strokeWidth="1.500" />)}
        </Canvas>
        {SELL_TAGS.map(([x, t]) => <Tag key={t} $side="sell" style={{ left: pctX(x) }}>{t}</Tag>)}
        {BUY_TAGS.map(([x, t]) => <Tag key={t} $side="buy" style={{ left: pctX(x) }}>{t}</Tag>)}
        {LEVEL_BOXES.map(([n, v, y, c]) => (
          <InfoBox key={n} $c={c} $w={306} style={{ left: pctX(2291), top: pctY(y, PRICE) }}>
            <InfoRow><span>{n}</span><span>{v}</span></InfoRow>
          </InfoBox>
        ))}
        <InfoBox $c="#8a9cb0" $w={306} style={{ left: pctX(2291), top: pctY(1987, PRICE) }}>
          {QUOTES.map(([n, v, c]) => <InfoRow key={n} $c={c ?? "#000"}><span>{n}</span><span>{v}</span></InfoRow>)}
        </InfoBox>
        <Chip>
          <ChipText>Price</ChipText>
          <BareButton aria-label="Settings"><WrenchIcon s={24} /></BareButton>
          <BareButton aria-label="Detach"><WindowIcon /></BareButton>
          <BareButton aria-label="Close"><CloseIcon /></BareButton>
          <BareButton aria-label="Sell orders"><PageArrow /></BareButton>
          <BareButton aria-label="Buy orders"><PageArrow up /></BareButton>
        </Chip>
        <DayText>Day:High 13,020.0 Low 12,968.0</DayText>
        <Notice>© IT-Finance.com <em>Data is indicative</em></Notice>
      </Plot>
      <Axis>
        {prices.filter((p) => !FLAGGED.includes(p)).map((p) => (
          <Scale key={p} $bold={p % 50 === 0} style={{ top: pctY(p === 13230 ? 1299 : p === 12790 ? 2759 : priceY(p), PRICE) }}>{p.toLocaleString("en-US")}</Scale>
        ))}
        {PRICE_FLAGS.map(([t, y, c, bg]) => <Flag key={t} $c={c} $bg={bg} style={{ top: pctY(y, PRICE) }}>{t}</Flag>)}
      </Axis>
    </Pane>
  );
}

export default function App() {
  return (
    <Page>
      <GlobalStyle />
      <MenuBar>
        <MenuGroup>
          <svg width="22" height="26" viewBox="0 0 22 26" fill="#30373e"><path d="M15 0C15 4 12 6.500 10.500 6.500C10.500 3 13 0.500 15 0ZM11 8C12.500 8 14 6.800 16 6.800C18 6.800 19.500 7.800 20.500 9.200C17 11.500 17.500 16.500 21.500 18C20.500 21 18.500 25 16 25C14.500 25 13.500 24 11.500 24S8.500 25 7 25C4 25 0.500 19 0.500 14C0.500 9.500 3.500 7 6.500 7C8.500 7 9.500 8 11 8Z" /></svg>
          <AppName>ProRealTime v10.3</AppName>
        </MenuGroup>
        <MenuGroup>
          <StatusSlot $w={40}><MiniCandles /></StatusSlot>
          <StatusSlot $w={40}><svg width="28" height="20" viewBox="0 0 28 20" fill="#30373e"><path d="M3 17C-1 16 0 10 4 10C4 5 8 4 9 5C11 0 19 -1 21 5C15 5 11 9 11 12C7 12 6 15 8 17Z" /><path d="M11 19C8 18 9 13 12 13C13 7 22 6 23 12C28 11 29 19 25 19Z" /></svg></StatusSlot>
          <StatusSlot $w={46}><svg width="22" height="23" viewBox="0 0 22 23" fill="#30373e"><path d="M0 0H10V23H0ZM13 0H22V10H13ZM13 13H22V23H13Z" /></svg></StatusSlot>
          <StatusSlot $w={40}><svg width="27" height="26" viewBox="0 0 27 26"><path d="M1 3Q14 -3 26 3Q27 18 13.500 26Q0 18 1 3Z" fill="#1f242c" /><path d="M8 12L12 16L20 7" stroke="#fff" strokeWidth="3" fill="none" /></svg></StatusSlot>
          <StatusSlot $w={32}><svg width="26" height="26" viewBox="0 0 26 26" fill="none" stroke="#b8bcc2" strokeWidth="3"><rect x="2" y="2" width="22" height="14" rx="2" /><path d="M8 9H11M15 9H18" /><rect x="2" y="20" width="22" height="5" rx="2" fill="#b8bcc2" strokeWidth="1" /></svg></StatusSlot>
          <StatusSlot $w={52}><Bluetooth size={25} strokeWidth={1.5} color="#8a9096" /></StatusSlot>
          <StatusSlot $w={44}><Wifi size={34} strokeWidth={2} /></StatusSlot>
          <StatusSlot $w={220}>{"Wed 6 Dec  05:37"}</StatusSlot>
          <StatusSlot $w={52}><Search size={25} strokeWidth={2} /></StatusSlot>
          <StatusSlot $w={54}><svg width="26" height="26" viewBox="0 0 26 26"><defs><radialGradient id="siri"><stop offset="0" stopColor="#fff" /><stop offset=".35" stopColor="#58b8e0" /><stop offset=".7" stopColor="#6a3ca8" /><stop offset="1" stopColor="#141836" /></radialGradient></defs><circle cx="13" cy="13" r="12.500" fill="url(#siri)" /><path d="M5 18L21 8M10 5L16 22M6 10L21 17" stroke="#dff" strokeWidth="1" /></svg></StatusSlot>
          <StatusSlot $w={38}><svg width="30" height="21" viewBox="0 0 30 21" stroke="#30373e" strokeWidth="3"><path d="M0 2H3M7 2H30M0 10H3M7 10H25M0 19H3M7 19H30" /></svg></StatusSlot>
        </MenuGroup>
      </MenuBar>
      <Frame>
        <TitleBar>
          <WindowButtons>
            <BareButton aria-label="Close window"><svg width="18" height="18" viewBox="0 0 18 18"><path d="M2 2L16 16M16 2L2 16" stroke="#fff" strokeWidth="3" /></svg></BareButton>
            <BareButton aria-label="Restore"><svg width="16" height="18" viewBox="0 0 16 18" fill="none" stroke="#fff" strokeWidth="2"><rect x="6" y="2" width="8" height="8" /><rect x="2" y="8" width="8" height="8" fill="#5a92ec" /></svg></BareButton>
            <BareButton aria-label="Minimise"><svg width="16" height="18" viewBox="0 0 16 18"><path d="M1 15H15" stroke="#fff" strokeWidth="3" /></svg></BareButton>
            <BareButton aria-label="Keyboard"><svg width="32" height="23" viewBox="0 0 32 23"><rect width="32" height="23" rx="3" fill="#fff" /><path d="M4 6H28M4 11H28" stroke="#3468c4" strokeWidth="3" strokeDasharray="3 2" /><path d="M10 17H22" stroke="#3468c4" strokeWidth="3" /></svg></BareButton>
          </WindowButtons>
          <TitleCenter>
            <svg width="26" height="26" viewBox="0 0 26 26" fill="none" stroke="#fff" strokeWidth="2"><path d="M5 7V26M18 0V5M18 21V26" /><rect x="1" y="11" width="8" height="11" fill="#fff" /><rect x="14" y="5" width="8" height="16" /></svg>
            <Triangle $s={6} $c="#fff" />
            <Ticker>DAX</Ticker>
            <svg width="20" height="20" viewBox="0 0 20 20"><rect x="1" y="1" width="18" height="18" fill="#fff" stroke="#9aa" strokeWidth="2" /><path d="M10 4V6M8 8H11V15M7 15H13" stroke="#888" strokeWidth="2" fill="none" /></svg>
            <LastPrice>12,969.5 (-0.32%)</LastPrice>
            <span>05:37:34 Germany 30 Cash (€5) (-)</span>
          </TitleCenter>
        </TitleBar>
        <AccountRow>
          {["Orders:", "Position:"].map((t) => (
            <AccountItem key={t}>
              <span>{t}</span><b>0</b><CancelPage /><span>&nbsp;/</span><b>0</b><Gears />
            </AccountItem>
          ))}
          <AccountItem><span>Latent gain:</span><b>€0.00</b></AccountItem>
          <AccountItem><span>Gain today:</span><b>€0.00</b></AccountItem>
        </AccountRow>
        <ToolRow>
          <Spacer $grow={16} />
          <ToolGroup>
            <Field $w={133}>
              <TextInput aria-label="Units" defaultValue="200000" />
              <Spin>
                <SpinButton aria-label="More"><Triangle $dir="up" $s={4} /></SpinButton>
                <SpinButton aria-label="Fewer"><Triangle $s={4} /></SpinButton>
              </Spin>
            </Field>
            <Field $w={125}><Select aria-label="Unit kind"><option>(x) units</option></Select><Caret><Triangle /></Caret></Field>
          </ToolGroup>
          <Spacer $grow={21} />
          <ToolGroup>
            <Field $w={130}><Select aria-label="Timeframe"><option>5 minutes</option></Select><Caret><Triangle /></Caret></Field>
          </ToolGroup>
          <Spacer $grow={21} />
          <ToolGroup>
            <RaisedButton $w={81} $h={46} aria-label="Add indicator"><IndicatorIcon /><SplitLine /><Triangle $s={5} /></RaisedButton>
          </ToolGroup>
          <Spacer $grow={16} />
          <OrderPanel>
            <Collapse aria-label="Collapse"><svg width="10" height="12" viewBox="0 0 10 12"><path d="M1 0L8 6L1 12Z" /></svg></Collapse>
            <OrderGroup $gap={4}>
              <QtyLabel htmlFor="qty">Qty</QtyLabel>
              <OrderCell><RaisedButton $w={31} $h={32} aria-label="Order settings"><WrenchIcon s={24} /></RaisedButton></OrderCell>
              <OrderCell><Field as="div" $w={80}><TextInput id="qty" defaultValue="1" /></Field></OrderCell>
            </OrderGroup>
            <OrderGroup>
              <OrderLabel $at="1 / 3">Limit</OrderLabel>
              <OrderCell><RaisedButton $w={45} $h={46} aria-label="Limit order"><OrderIcon /></RaisedButton></OrderCell>
              <OrderCell><RaisedButton $w={45} $h={46} aria-label="Limit line"><OrderIcon slash /></RaisedButton></OrderCell>
            </OrderGroup>
            <OrderGroup>
              <OrderLabel $at="1 / 3">Stop</OrderLabel>
              <OrderCell><RaisedButton $w={45} $h={46} aria-label="Stop order"><OrderIcon stop /></RaisedButton></OrderCell>
              <OrderCell><RaisedButton $w={45} $h={46} aria-label="Stop line"><OrderIcon stop slash /></RaisedButton></OrderCell>
            </OrderGroup>
            <OrderGroup $gap={4}>
              <OrderLabel $at="1">Sell MKT</OrderLabel>
              <OrderLabel $at="2">Buy MKT</OrderLabel>
              <OrderCell><TradeButton $tone="sell"><span>12,9</span><BigDigits>67.</BigDigits><SupDigit>0</SupDigit></TradeButton></OrderCell>
              <OrderCell><TradeButton $tone="buy"><span>12,9</span><BigDigits>72.</BigDigits><SupDigit>0</SupDigit></TradeButton></OrderCell>
            </OrderGroup>
            <StopGrid>
              <Tick type="checkbox" id="stop" /><CenterText htmlFor="stop">S</CenterText>
              <Field as="div" $w={52} $h={31}><TextInput $muted aria-label="Stop distance" defaultValue="10" /></Field>
              <Tick type="checkbox" id="limit" /><CenterText htmlFor="limit">L</CenterText>
              <Field as="div" $w={52} $h={31}><TextInput $muted aria-label="Limit distance" defaultValue="10" /></Field>
            </StopGrid>
          </OrderPanel>
        </ToolRow>
        <Charts id="charts">
          <EquityChart />
          <Divider />
          <PositionsChart />
          <Divider />
          <PriceChart />
          <TimeAxis>
            {DAY_GRID.map((x, i) => (
              <DayLabel key={x} $bold={DAY_NAMES[i] === "Dec"} style={{ left: pctX(x) }}>{DAY_NAMES[i]}</DayLabel>
            ))}
            <CursorLabel style={{ left: pctX(2456) }}>Thu 23-Nov-2017 22:25</CursorLabel>
          </TimeAxis>
        </Charts>
        <BottomBar>
          <ShareButton>
            <svg width="22" height="26" viewBox="0 0 22 26" fill="#fff" stroke="#fff" strokeWidth="3"><path d="M18 4L4 13L18 22" fill="none" /><circle cx="18" cy="4" r="2.500" /><circle cx="4" cy="13" r="2.500" /><circle cx="18" cy="22" r="2.500" /></svg>
            Share
          </ShareButton>
          <BarIcons>
            <BarButton $w={37} aria-label="Link charts">
              <svg width="37" height="34" viewBox="0 0 37 34" fill="none"><rect x="2" y="3" width="11" height="12" rx="5" fill="#fff" stroke="#000" strokeWidth="2" /><rect x="2" y="20" width="11" height="12" rx="5" fill="#fff" stroke="#000" strokeWidth="2" /><path d="M7 7V12M7 23V28" stroke="#000" strokeWidth="2" /><path d="M22 7V24" stroke="#c22" strokeWidth="2" /><path d="M32 0V27" stroke="#080" strokeWidth="2" /><rect x="18" y="11" width="7" height="10" fill="#f06868" stroke="#c22" strokeWidth="2" /><rect x="28" y="5" width="7" height="15" fill="#50dc50" stroke="#080" strokeWidth="2" /><path d="M22 26H34L28 33Z" fill="#000" stroke="#fff" /></svg>
            </BarButton>
            <BarButton $w={26} aria-label="Order list">
              <svg width="22" height="25" viewBox="0 0 22 25" fill="none"><rect x="1" y="1" width="20" height="23" fill="#fff" stroke="#000" strokeWidth="2" /><path d="M2 8L20 13M2 14L20 19M2 2L10 4M8 20L20 23M10 2V10M12 12V22" stroke="#000" strokeWidth="2" /><path d="M13 2H20L16 8Z" fill="#f07070" /><path d="M2 23L6 17L10 23Z" fill="#2c2" /></svg>
            </BarButton>
            <BarButton $w={26} aria-label="Market depth">
              <svg width="26" height="28" viewBox="0 0 26 28">
                <path d="M1 1H14V6H1ZM5 6H13V11H5ZM3 11H14V17H3ZM8 17H13V22H8ZM1 22H13V27H1Z" fill="#50d050" />
                <path d="M14 1H20V6H14ZM13 6H25V11H13ZM14 11H20V17H14ZM13 17H25V22H13ZM13 22H19V27H13Z" fill="#f08080" />
                <path d="M1 1H20V6H25V11H20V17H25V22H19V27H1V22H8V17H3V11H5V6H1ZM1 6H25M3 11H25M3 17H25M1 22H25" fill="none" stroke="#556" strokeWidth="1.500" />
              </svg>
            </BarButton>
          </BarIcons>
          <Track role="scrollbar" aria-controls="charts" aria-valuenow={98}>
            <Knob $w={30} aria-label="Scroll left"><svg width="8" height="12" viewBox="0 0 8 12"><path d="M7 0L1 6L7 12Z" /></svg></Knob>
            <TrackEnd>
              <Knob $w={80} aria-label="Scroll position"><svg width="16" height="12" viewBox="0 0 16 12" stroke="#748c98" strokeWidth="2"><path d="M0 2H16M0 6H16M0 10H16" /></svg></Knob>
              <Knob $w={25} aria-label="Scroll right"><svg width="8" height="12" viewBox="0 0 8 12"><path d="M1 0L7 6L1 12Z" /></svg></Knob>
            </TrackEnd>
          </Track>
          <ZoomIcons>
            <BareButton aria-label="Chart settings">
              <svg width="27" height="34" viewBox="0 0 27 34"><rect x="1" y="20" width="10" height="11" fill="#f08080" stroke="#555" strokeWidth="1.500" /><path d="M20 0V34" stroke="#555" strokeWidth="2" /><rect x="15" y="4" width="10" height="24" fill="#50d050" stroke="#555" strokeWidth="1.500" /><path d="M3 29L14 16Q11 9 18 7V13H22L24 10Q24 19 18 19L7 32Q2 33 3 29Z" fill="#fff" stroke="#000" strokeWidth="2" /></svg>
            </BareButton>
            <BareButton aria-label="Fit"><Magnifier sign="" /></BareButton>
            <BareButton aria-label="Zoom out"><Magnifier sign="-" /></BareButton>
            <BareButton aria-label="Zoom in"><Magnifier sign="+" /></BareButton>
          </ZoomIcons>
        </BottomBar>
      </Frame>
    </Page>
  );
}
